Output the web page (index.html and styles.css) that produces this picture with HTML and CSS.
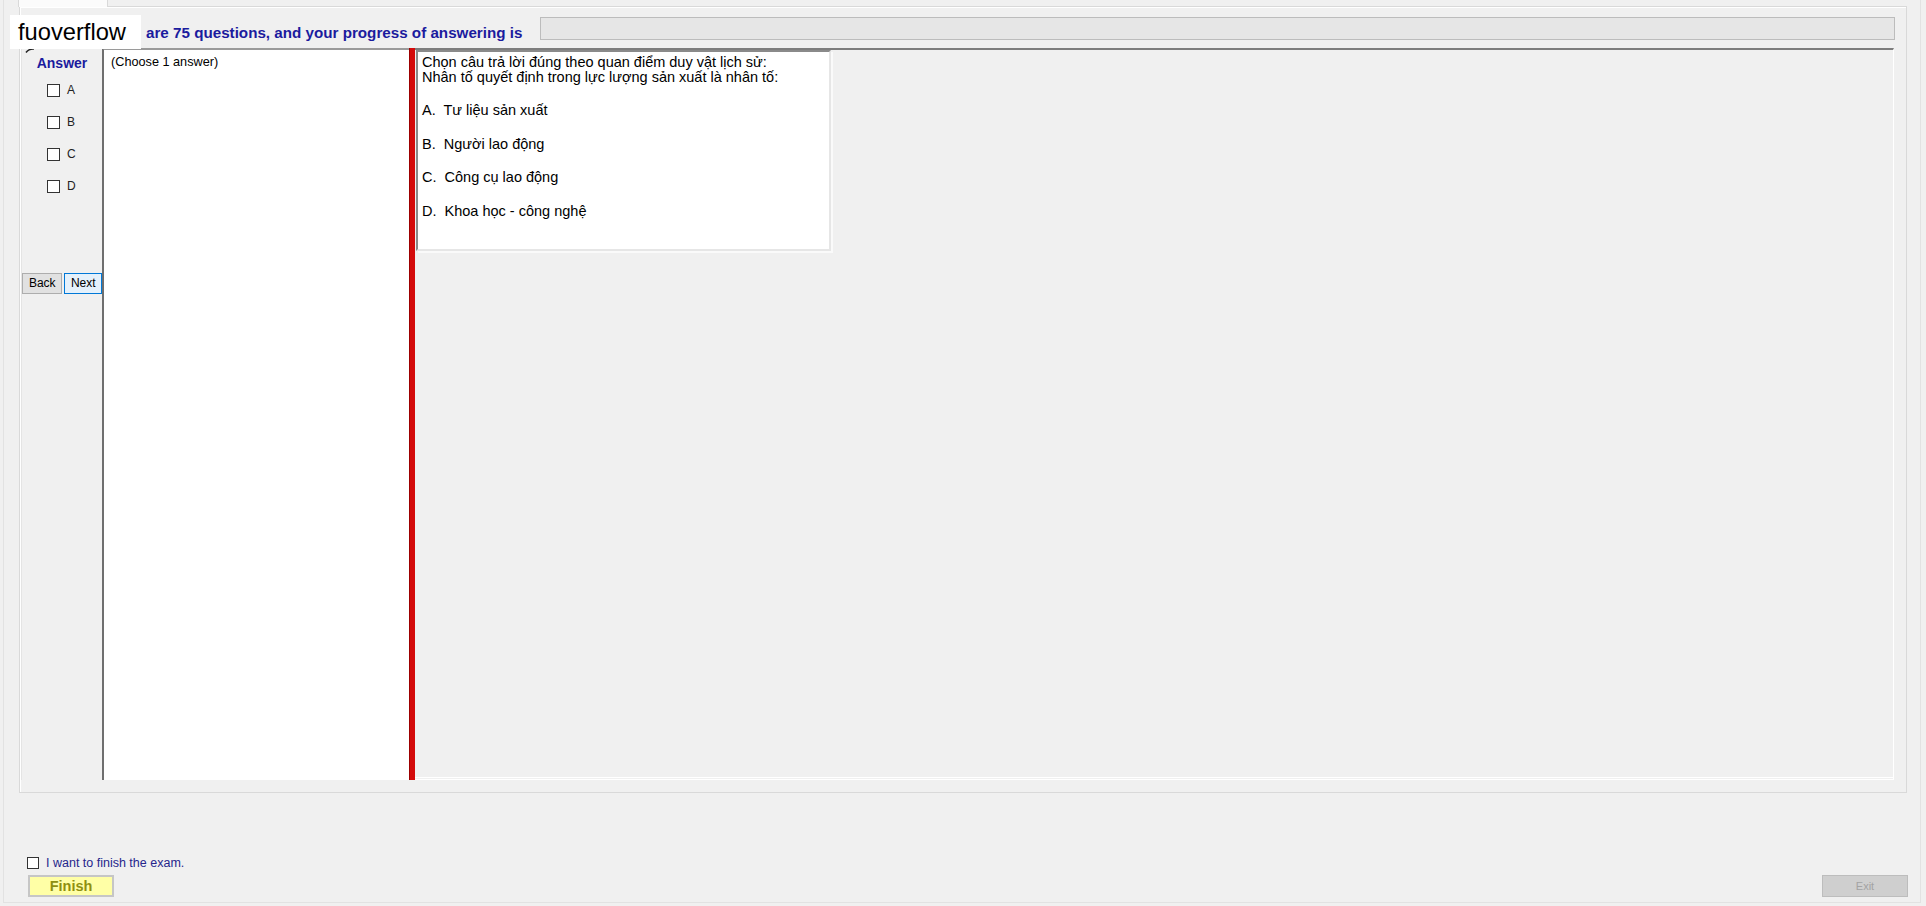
FILE: index.html
```html
<!DOCTYPE html>
<html lang="vi">
<head>
    <meta charset="UTF-8">
    <title>Exam</title>
    <link rel="stylesheet" href="styles.css">
</head>
<body>
<div class="window">
    <!-- watermark over the header -->
    <div class="brand">fuoverflow</div>
    <svg class="timer" width="10" height="5" viewBox="0 0 10 5"><path d="M1 4.5 Q4 0.5 9 1" fill="none" stroke="#222" stroke-width="1.6"/></svg>

    <div class="tabstrip"><div class="tab"></div></div>

    <div class="tabpage">
        <div class="header">
            <span class="intro">are 75 questions, and your progress of answering is</span>
            <div class="progress"></div>
        </div>

        <div class="content">
            <div class="nav">
                <div class="nav-title">Answer</div>
                <label class="opt"><span class="box"></span>A</label>
                <label class="opt"><span class="box"></span>B</label>
                <label class="opt"><span class="box"></span>C</label>
                <label class="opt"><span class="box"></span>D</label>
                <div class="nav-btns">
                    <a href="javascript:;" class="btn back">Back</a>
                    <a href="javascript:;" class="btn next">Next</a>
                </div>
            </div>

            <div class="list">(Choose 1 answer)</div>
            <div class="splitter"></div>

            <div class="pane">
                <div class="question">
                    <p>Chọn câu trả lời đúng theo quan điểm duy vật lịch sử:<br>Nhân tố quyết định trong lực lượng sản xuất là nhân tố:</p>
                    <p class="ans">A.&nbsp; Tư liệu sản xuất</p>
                    <p class="ans">B.&nbsp; Người lao động</p>
                    <p class="ans">C.&nbsp; Công cụ lao động</p>
                    <p class="ans">D.&nbsp; Khoa học - công nghệ</p>
                </div>
            </div>
        </div>
    </div>

    <div class="footer">
        <label class="finish-check"><span class="box"></span>I want to finish the exam.</label>
        <div class="footer-btns">
            <a href="javascript:;" class="finish">Finish</a>
            <a href="javascript:;" class="exit">Exit</a>
        </div>
    </div>
</div>
</body>
</html>
```

FILE: styles.css
```css
*{margin:0;padding:0;box-sizing:border-box;}
a{text-decoration:none;}
body{background:#f0f0f0;font-family:"Liberation Sans",Arial,sans-serif;color:#000;}

.window{position:relative;height:903px;margin:0 5px 0 3px;border:1px solid #e2e2e2;border-top:none;}

.brand{position:absolute;left:6px;top:15px;width:131px;height:34px;background:#fff;font-size:23.7px;line-height:34px;padding-left:8px;z-index:3;}
.timer{position:absolute;left:21px;top:48px;}

.tabstrip{height:6px;padding-left:14px;}
.tab{width:90px;height:7px;background:#fbfbfb;border:1px solid #d9d9d9;border-top:none;border-bottom:none;position:relative;z-index:1;}

.tabpage{height:787px;margin:0 13px 0 15px;border:1px solid #d9d9d9;box-shadow:inset 1px 1px #fff;}

.header{display:flex;height:41px;padding:0 11px 0 126px;}
.intro{margin-top:17px;font-size:15.2px;line-height:17px;font-weight:bold;color:#1b1b9e;white-space:nowrap;}
.progress{flex:1;margin:10px 0 0 18px;height:23px;background:#e6e6e6;border:1px solid #bcbcbc;}

.content{display:flex;height:732px;margin:0 12px 0 1px;}

.nav{width:81px;border-left:1px solid #e4e4e4;}
.nav-title{margin-top:7px;text-align:center;font-size:14px;line-height:16px;font-weight:bold;color:#1b1b9e;}
.opt{display:flex;align-items:center;height:32px;padding-left:25px;font-size:12px;color:#222;}
.opt:first-of-type{margin-top:3px;}
.box{display:inline-block;width:13px;height:13px;border:1px solid #333;background:#fff;margin-right:7px;}
.nav-btns{display:flex;gap:2px;margin-top:71px;}
.btn{display:block;height:21px;line-height:19px;font-size:12px;color:#000;text-align:center;border:1px solid #adadad;background:#e1e1e1;}
.back{width:41px;}
.next{width:38px;background:#e5f1fb;border-color:#0078d7;}

.list{width:307px;background:#fff;border-left:2px solid #6f6f6f;border-top:2px solid #9a9a9a;padding:5px 0 0 7px;font-size:12.7px;line-height:15px;}
.splitter{width:6px;background:#d40b0b;border-left:1px solid #9c0000;}

.pane{flex:1;border-top:2px solid #7d7d7d;border-right:1px solid #fff;border-bottom:3px double #fff;padding-left:1px;}
.question{width:415px;height:201px;background:#fff;border:2px solid;border-color:#8a8a8a #e6e6e6 #e6e6e6 #8a8a8a;box-shadow:2px 2px 0 #fafafa;padding:3px 4px;font-size:14.5px;line-height:14.5px;}
.ans{margin-top:19px;white-space:pre;}

.footer{margin-top:62px;}
.finish-check{display:flex;align-items:center;height:16px;padding-left:23px;font-size:12.5px;color:#26268c;}
.finish-check .box{width:12px;height:12px;margin-right:7px;}
.footer-btns{display:flex;justify-content:space-between;margin:4px 12px 0 24px;}
.finish{display:block;width:86px;height:22px;line-height:18px;text-align:center;background:#ffffa6;border:2px solid #c6c6c6;font-size:14.5px;font-weight:bold;color:#8f8f10;}
.exit{display:block;width:86px;height:22px;line-height:20px;text-align:center;background:#cfcfcf;border:1px solid #bdbdbd;font-size:11px;color:#a3a3a3;}
```
